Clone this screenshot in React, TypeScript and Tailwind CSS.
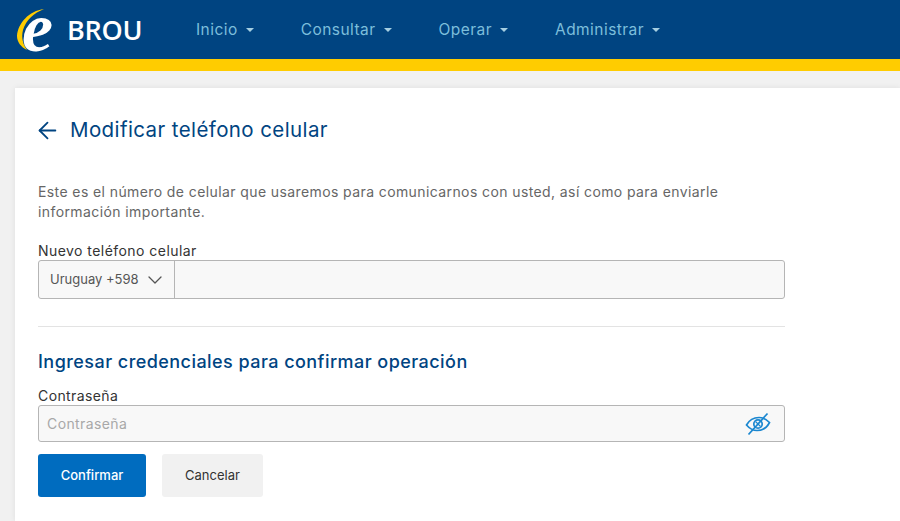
import { ArrowLeft, ChevronDown } from "lucide-react";

const nav = ["Inicio", "Consultar", "Operar", "Administrar"];

function Logo() {
  return (
    <div className="flex items-center w-[181px] h-[59px] shrink-0">
      <div className="relative w-[52px] h-[59px] shrink-0">
        <svg viewBox="0 0 52 59" className="absolute left-0 top-0 w-[52px] h-[59px]">
          <path d="M29 9 C14 11 3 23 2 36 C2 42 6 47 12 50 C8 44 6 38 8 30 C11 20 19 13 29 9 Z" fill="#ffcc00" />
        </svg>
        <span className="absolute left-[7px] top-0 font-['Liberation_Serif',serif] italic font-bold text-[70px] leading-[56px] text-white">
          e
        </span>
      </div>
      <span className="font-['Open_Sans',sans-serif] font-semibold text-[27px] leading-[32px] text-white tracking-[-0.3px]">
        BROU
      </span>
    </div>
  );
}

function EyeOff() {
  return (
    <svg viewBox="0 0 26 24" className="w-[26px] h-[24px] text-[#1b87d0]" fill="none" stroke="currentColor" strokeWidth="1.7">
      <path d="M1.5 13 C4 8.5 9 5.5 14 5.5 C18 5.5 21.5 7.5 24.5 10.5 C22 15.5 17 18.5 12 18.5 C8 18.5 4.5 16.5 1.5 13 Z" />
      <circle cx="13" cy="12" r="4.2" />
      <path d="M22.5 1.5 L3.5 22.5" />
      <path d="M10.5 9.5 L15.5 14.5" strokeWidth="1.2" />
    </svg>
  );
}

export default function App() {
  return (
    <div className="h-[521px] overflow-hidden bg-[#f1f1f1] font-['Inter',sans-serif]">
      <header className="h-[71px] bg-[#004481] border-b-[12px] border-[#ffcc00] flex pl-[15px]">
        <Logo />
        <nav className="flex items-center gap-[47px] h-[59px]">
          {nav.map((item) => (
            <div key={item} className="flex items-center gap-[8px] text-[15.5px] tracking-[0.45px] text-[#7cbedb]">
              {item}
              <span className="w-0 h-0 border-x-[4px] border-x-transparent border-t-[4px] border-t-[#a6cfe2]" />
            </div>
          ))}
        </nav>
      </header>

      <main className="mt-[17px] ml-[15px] h-[433px] bg-white pl-[23px] pt-[27px] shadow-[0_0_6px_rgba(0,0,0,0.08)]">
        <div className="w-[747px]">
          <div className="flex items-center gap-[9px] h-[30px]">
            <ArrowLeft className="w-[27px] h-[27px] -ml-[4px] text-[#004481]" strokeWidth={1.6} />
            <h1 className="text-[20.5px] tracking-[0.4px] font-normal text-[#004481]">Modificar teléfono celular</h1>
          </div>

          <p className="mt-[37px] text-[14px] tracking-[0.4px] leading-[20px] text-[#666666]">
            Este es el número de celular que usaremos para comunicarnos con usted, así como para enviarle<br />
            información importante.
          </p>

          <label className="block mt-[20px] text-[14px] tracking-[0.45px] leading-[18px] text-[#333333]">Nuevo teléfono celular</label>
          <div className="flex h-[39px] rounded-[3px] border border-[#b5b5b5] bg-[#f8f8f8]">
            <div className="flex items-center gap-[4px] w-[136px] pl-[11px] border-r border-[#b5b5b5] text-[13px] text-[#555555]">
              Uruguay +598
              <ChevronDown className="w-[24px] h-[24px] text-[#555555]" strokeWidth={1.3} />
            </div>
          </div>

          <div className="mt-[27px] border-t border-[#e3e3e3]" />

          <h2 className="mt-[24px] text-[18px] tracking-[0.45px] leading-[22px] font-medium text-[#004481]">
            Ingresar credenciales para confirmar operación
          </h2>

          <label className="block mt-[13px] text-[14px] tracking-[0.4px] leading-[19px] text-[#333333]">Contraseña</label>
          <div className="flex items-center justify-between h-[37px] rounded-[3px] border border-[#b5b5b5] bg-[#f8f8f8] pl-[8px] pr-[13px]">
            <span className="text-[14px] tracking-[0.4px] text-[#a8a8a8]">Contraseña</span>
            <EyeOff />
          </div>

          <div className="flex gap-[16px] mt-[12px]">
            <button className="w-[108px] h-[43px] pt-[1px] rounded-[3px] bg-[#006cbf] text-[13px] font-medium text-white">Confirmar</button>
            <button className="w-[101px] h-[43px] pt-[1px] rounded-[3px] bg-[#f1f1f1] text-[13px] text-[#333333]">Cancelar</button>
          </div>
        </div>
      </main>
    </div>
  );
}
